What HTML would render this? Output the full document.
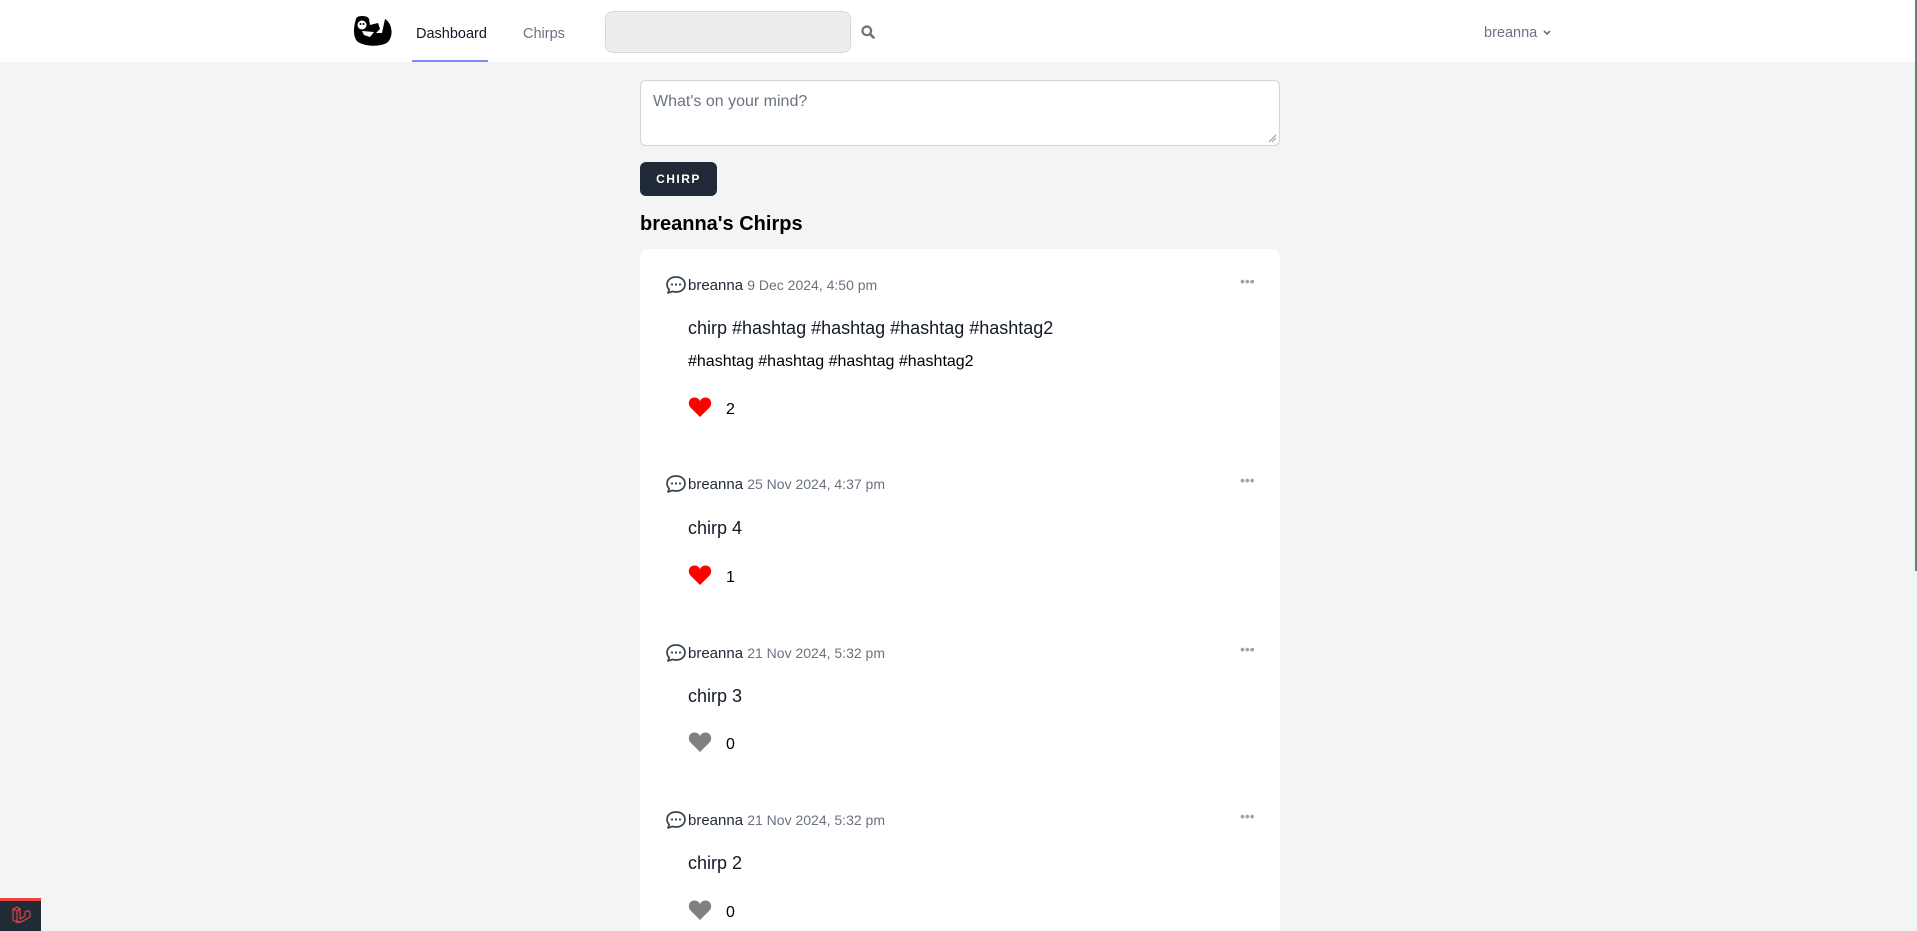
<!DOCTYPE html>
<html><head><meta charset="utf-8"><style>
*{margin:0;padding:0;box-sizing:border-box}
html,body{width:1917px;height:931px;overflow:hidden}
body{background:#f3f4f6;font-family:"Liberation Sans",sans-serif;position:relative;color:#111827}
.a{position:absolute;white-space:nowrap}
nav{position:absolute;left:0;top:0;width:1917px;height:62px;background:#fff}
.card{position:absolute;left:640px;top:249px;width:640px;height:682px;background:#fff;border-radius:8px 8px 0 0}
.hd{font-size:15px;color:#1f2937}
.hd span{font-size:14px;color:#6b7280}
.txt{font-size:18px;color:#111827}
.cnt{font-size:16px;color:#000}
.dots{color:#9ca3af;font-size:14px;letter-spacing:0px}
</style></head><body>
<nav>
<svg class="a" style="left:352px;top:15px" width="41" height="31" viewBox="0 0 41 31">
<path d="M4 4 C4 0 16 0 17 4 L18 10 L26 8 L28 14 L24 18 L30 18 L33 4 C40 8 42 20 36 27 C30 32 14 32 6 27 C0 22 2 10 4 4Z" fill="#000"/>
<circle cx="10" cy="10" r="4.5" fill="#fff"/><circle cx="8.5" cy="9" r="1" fill="#000"/><circle cx="11.5" cy="9" r="1" fill="#000"/>
<path d="M10 16 L22 17 L18 22 L12 20Z" fill="#fff"/>
</svg>
<div class="a" style="left:416px;top:26px;font-size:14.5px;color:#111827">Dashboard</div>
<div class="a" style="left:412px;top:60px;width:76px;height:2px;background:#818cf8"></div>
<div class="a" style="left:523px;top:26px;font-size:14.5px;color:#6b7280">Chirps</div>
<div class="a" style="left:605px;top:11px;width:246px;height:42px;background:#ededed;border:1px solid #d8d8d8;border-radius:8px"></div>
<svg class="a" style="left:861px;top:25px" width="14" height="14" viewBox="0 0 14 14"><circle cx="5.8" cy="5.8" r="4.3" fill="none" stroke="#6b7280" stroke-width="2.2"/><path d="M9 9 L12.5 12.5" stroke="#6b7280" stroke-width="2.6" stroke-linecap="round"/></svg>
<div class="a" style="left:1484px;top:25px;font-size:14.5px;color:#6b7280">breanna</div>
<svg class="a" style="left:1542px;top:29px" width="10" height="8" viewBox="0 0 10 8"><path d="M2 2 L5 5 L8 2" fill="none" stroke="#6b7280" stroke-width="1.6"/></svg>
</nav>
<div class="a" style="left:1915px;top:0;width:2px;height:571px;background:#777"></div>
<div class="a" style="left:640px;top:80px;width:640px;height:66px;background:#fff;border:1px solid #d1d5db;border-radius:6px"></div>
<div class="a" style="left:653px;top:93px;font-size:16px;color:#6b7280">What's on your mind?</div>
<svg class="a" style="left:1268px;top:134px" width="9" height="9"><path d="M1 8 L8 1 M4 8 L8 4" stroke="#999" stroke-width="1"/></svg>
<div class="a" style="left:640px;top:162px;width:77px;height:34px;background:#1f2937;border-radius:6px;color:#fff;font-size:12px;font-weight:bold;letter-spacing:1.5px;text-align:center;line-height:34px">CHIRP</div>
<div class="a" style="left:640px;top:213px;font-size:20px;font-weight:bold;color:#000">breanna's Chirps</div>
<div class="card"></div>
<svg width="0" height="0" style="position:absolute"><defs>
<symbol id="bub" viewBox="0 0 22 20"><path d="M11 2 C16.5 2 20 5.3 20 9.5 C20 13.7 16.5 17 11 17 C9.6 17 8.4 16.8 7.3 16.4 L3 18 L4.2 14.5 C2.8 13.2 2 11.5 2 9.5 C2 5.3 5.5 2 11 2Z" fill="none" stroke="#374151" stroke-width="1.7" stroke-linejoin="round"/><circle cx="7" cy="9.5" r="1.1" fill="#374151"/><circle cx="11" cy="9.5" r="1.1" fill="#374151"/><circle cx="15" cy="9.5" r="1.1" fill="#374151"/></symbol>
<symbol id="hrt" viewBox="0 0 24 22"><path d="M12 21 L2.5 11.5 C-0.5 8.5 0.5 2 6 1.5 C9 1.3 11 3 12 5 C13 3 15 1.3 18 1.5 C23.5 2 24.5 8.5 21.5 11.5Z"/></symbol>
</defs></svg>

<svg class="a" style="left:665px;top:275px" width="22" height="20"><use href="#bub"/></svg>
<div class="a hd" style="left:688px;top:277px">breanna <span>9 Dec 2024, 4:50 pm</span></div>
<div class="a dots" style="left:1240px;top:273px">•••</div>
<div class="a txt" style="left:688px;top:318px">chirp #hashtag #hashtag #hashtag #hashtag2</div>
<div class="a" style="left:688px;top:353px;font-size:16px;color:#000">#hashtag #hashtag #hashtag #hashtag2</div>
<svg class="a" style="left:688px;top:396px;fill:#ff0000" width="24" height="22"><use href="#hrt"/></svg>
<div class="a cnt" style="left:726px;top:401px">2</div>

<svg class="a" style="left:665px;top:474px" width="22" height="20"><use href="#bub"/></svg>
<div class="a hd" style="left:688px;top:476px">breanna <span>25 Nov 2024, 4:37 pm</span></div>
<div class="a dots" style="left:1240px;top:472px">•••</div>
<div class="a txt" style="left:688px;top:518px">chirp 4</div>
<svg class="a" style="left:688px;top:564px;fill:#ff0000" width="24" height="22"><use href="#hrt"/></svg>
<div class="a cnt" style="left:726px;top:569px">1</div>

<svg class="a" style="left:665px;top:643px" width="22" height="20"><use href="#bub"/></svg>
<div class="a hd" style="left:688px;top:645px">breanna <span>21 Nov 2024, 5:32 pm</span></div>
<div class="a dots" style="left:1240px;top:641px">•••</div>
<div class="a txt" style="left:688px;top:686px">chirp 3</div>
<svg class="a" style="left:688px;top:731px;fill:#808080" width="24" height="22"><use href="#hrt"/></svg>
<div class="a cnt" style="left:726px;top:736px">0</div>

<svg class="a" style="left:665px;top:810px" width="22" height="20"><use href="#bub"/></svg>
<div class="a hd" style="left:688px;top:812px">breanna <span>21 Nov 2024, 5:32 pm</span></div>
<div class="a dots" style="left:1240px;top:808px">•••</div>
<div class="a txt" style="left:688px;top:853px">chirp 2</div>
<svg class="a" style="left:688px;top:899px;fill:#808080" width="24" height="22"><use href="#hrt"/></svg>
<div class="a cnt" style="left:726px;top:904px">0</div>

<div class="a" style="left:0;top:898px;width:41px;height:33px;background:#212b36;border-top:3px solid #ef4444"></div>
<svg class="a" style="left:11px;top:906px" width="20" height="20" viewBox="0 0 20 20"><path d="M2 3 L6 1 L9 3 L9 13 L14 10 L14 6 L17 4.5 L19 6 L19 11 L10 16 L7 17 L2 14Z M2 3 L6 5 L9 3 M6 5 L6 15 L10 16" fill="none" stroke="#ef4444" stroke-width="1.1" stroke-linejoin="round"/></svg>
</body></html>
